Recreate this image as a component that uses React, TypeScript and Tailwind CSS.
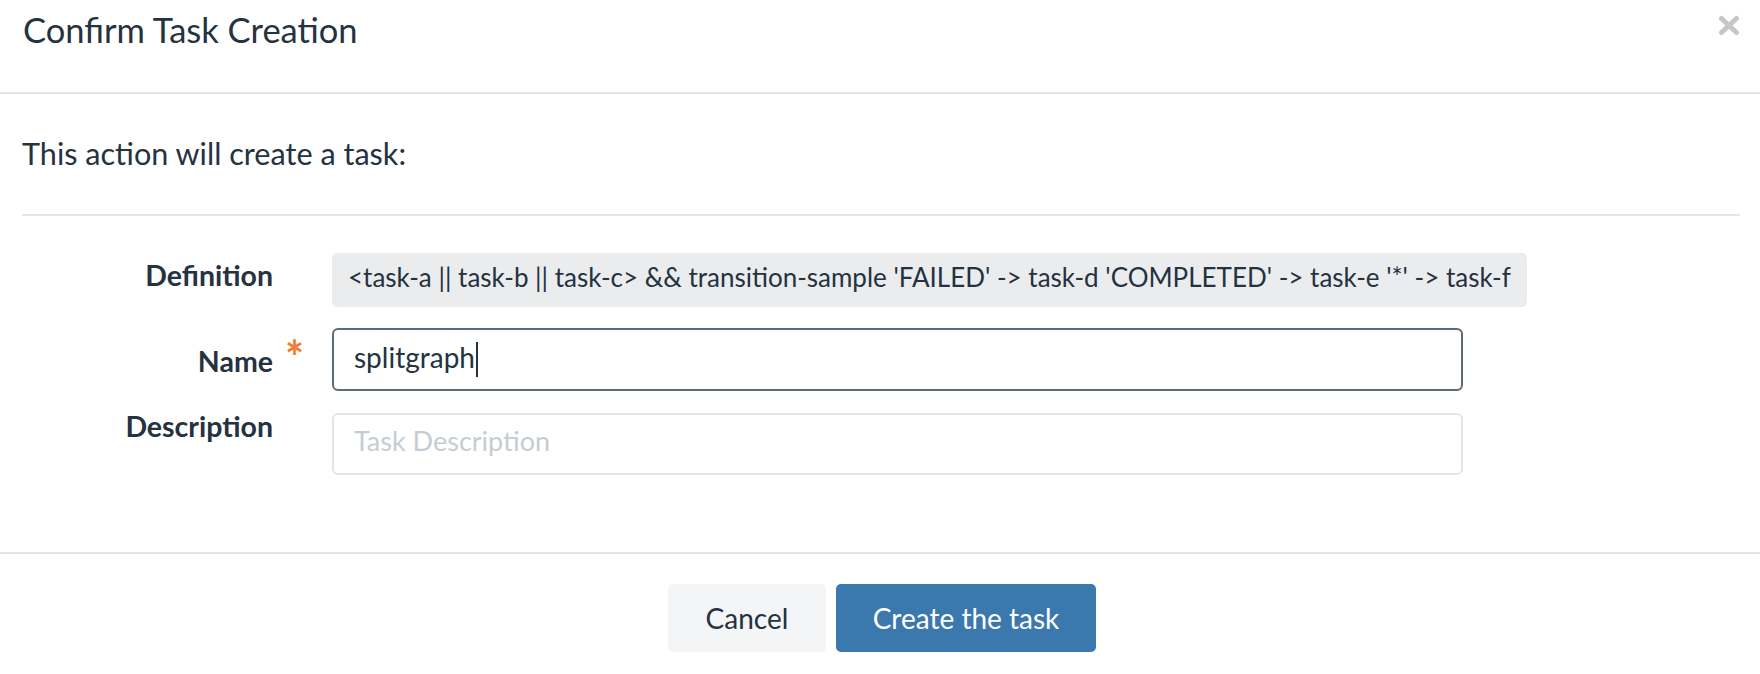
import { useState } from "react";

const Label = ({ text, required, offset }: { text: string; required?: boolean; offset: string }) => {
  return (
    <div className="flex shrink-0">
      <div className={`w-[251px] text-right font-bold text-[28.5px] leading-[27px] ${offset}`}>{text}</div>
      <div className="w-[59px] pl-[12px]">
        {required && (
          <span className="block mt-[12px] text-[45px] leading-[34px] font-bold text-[#f07d2f]">*</span>
        )}
      </div>
    </div>
  );
};

export default function App() {
  const [name] = useState("splitgraph");

  return (
    <div className="w-[1760px] h-[674px] bg-white text-[#25323f] flex flex-col overflow-hidden font-['Lato',sans-serif]">
      <div className="h-[94px] shrink-0 border-b-2 border-[#e1e5e7] flex items-start justify-between pl-[23px] pr-[20px]">
        <h4 className="pt-[10px] text-[34.5px] leading-[40px]">Confirm Task Creation</h4>
        <button className="mt-[15px] w-[22px] h-[21px] text-[#c6c6c6]" aria-label="close">
          <svg viewBox="0 0 22 21" width="22" height="21">
            <path d="M3.5 3.5 L18.5 17.5 M18.5 3.5 L3.5 17.5" stroke="currentColor" strokeWidth="5" strokeLinecap="round" />
          </svg>
        </button>
      </div>

      <div className="flex-1 pl-[22px] pr-[20px]">
        <p className="mt-[42px] text-[30.6px] leading-[36px]">This action will create a task:</p>
        <div className="mt-[42px] h-[2px] bg-[#e4e7ea]" />

        <div className="mt-[37px] flex">
          <Label text="Definition" offset="mt-[9px]" />
          <div className="h-[54px] leading-[48px] px-4 text-[26px] bg-[#ebecee] rounded-[5px] whitespace-nowrap">
            {"<task-a || task-b || task-c> && transition-sample 'FAILED' -> task-d 'COMPLETED' -> task-e '*' -> task-f"}
          </div>
        </div>

        <div className="mt-[21px] flex">
          <Label text="Name" required offset="mt-[20px]" />
          <div className="w-[1131px] h-[63px] border-2 border-[#5e6a75] rounded-[6px] px-[20px] pb-[6px] flex items-center text-[28px]">
            <span>{name}</span>
            <span className="ml-[1px] w-[2px] h-[35px] mt-[5px] bg-[#25323f]" />
          </div>
        </div>

        <div className="mt-[22px] flex">
          <Label text="Description" offset="mt-0" />
          <div className="w-[1131px] h-[62px] border-2 border-[#e2e6ea] rounded-[6px] px-[20px] pb-[5px] flex items-center text-[27px] text-[#c5cdd4]">
            Task Description
          </div>
        </div>
      </div>

      <div className="h-[122px] shrink-0 border-t-2 border-[#e1e5e7] pt-[30px] flex justify-center gap-[10px] pl-[4px]">
        <button className="w-[158px] h-[68px] rounded-[5px] bg-[#f4f5f7] text-[28px] text-[#25323f]">Cancel</button>
        <button className="w-[260px] h-[68px] rounded-[5px] bg-[#3a78ae] text-[28px] text-white">Create the task</button>
      </div>
    </div>
  );
}
